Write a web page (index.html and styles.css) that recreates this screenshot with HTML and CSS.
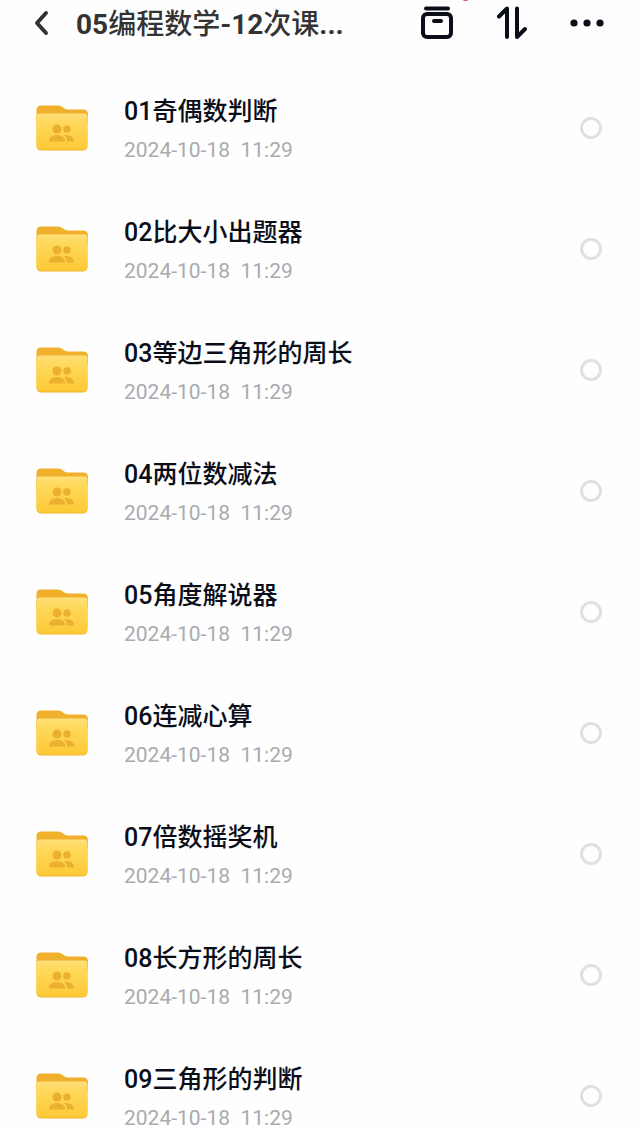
FILE: index.html
```html
<!DOCTYPE html>
<html lang="zh-CN">

<head>
    <meta charset="UTF-8">
    <meta name="viewport" content="width=device-width, initial-scale=1.0">
    <title>05编程数学-12次课</title>
    <link rel="stylesheet" href="styles.css">
</head>

<body>
    <svg class="symbols" aria-hidden="true">
        <defs>
            <linearGradient id="front" x1="0" y1="0" x2="0" y2="1">
                <stop offset="0" stop-color="#ffe07a" />
                <stop offset="0.25" stop-color="#ffd95c" />
                <stop offset="1" stop-color="#fdc936" />
            </linearGradient>
            <symbol id="folder" viewBox="0 0 52 46">
                <path fill="#f0b02c" d="M5 0.500h17q3 0 5 2t5 2h15q5 0 5 5v8H0.500V5q0-4.500 4.500-4.500z" />
                <path fill="#f3b52c" d="M0.500 13q0-3.500 3.500-3.500h44.500q3 0 3 3v28q0 5-5 5H5.500q-5 0-5-5z" />
                <path fill="url(#front)" d="M0.500 12q0-3.500 3.500-3.500h44.500q3 0 3 3v28q0 5-5 5H5.500q-5 0-5-5z" />
                <g fill="#eab02e">
                    <circle cx="21" cy="24" r="4.500" />
                    <circle cx="31" cy="24" r="3.800" />
                    <path d="M13 36.500q0-6.500 8-6.500t8 6.500z" />
                    <path d="M28 30q10-1 10 6.500h-7q0-4-3-6.500z" />
                </g>
            </symbol>
        </defs>
    </svg>

    <header class="topbar">
        <button class="icon-btn back" type="button" aria-label="返回">
            <svg width="16" height="26" viewBox="0 0 16 26">
                <path class="stroke" d="M12 3L3 13l9 10" />
            </svg>
        </button>
        <h1 class="page-title">05<span class="cjk">编程数学</span>-12<span class="cjk">次课</span>...</h1>
        <div class="actions">
            <button class="icon-btn" type="button" aria-label="收纳">
                <svg width="34" height="34" viewBox="0 0 34 34">
                    <path class="stroke" d="M6 2.500h22" />
                    <rect class="stroke" x="3" y="8" width="28" height="23" rx="4" />
                    <path class="stroke" d="M14 15h7" />
                </svg>
                <span class="badge"></span>
            </button>
            <button class="icon-btn" type="button" aria-label="排序">
                <svg width="32" height="34" viewBox="0 0 32 34">
                    <path class="stroke" d="M3 10.500l8-8v28.500M21 2.500v28.500l8-8" />
                </svg>
            </button>
            <button class="icon-btn" type="button" aria-label="更多">
                <svg width="34" height="34" viewBox="0 0 34 34">
                    <circle cx="4" cy="17" r="3.600" />
                    <circle cx="17" cy="17" r="3.600" />
                    <circle cx="30" cy="17" r="3.600" />
                </svg>
            </button>
        </div>
    </header>

    <ul class="files">
        <li class="file">
            <svg class="folder"><use href="#folder" /></svg>
            <label class="info" for="f1">
                <span class="name">01奇偶数判断</span>
                <time class="date">2024-10-18  11:29</time>
            </label>
            <input class="pick" type="checkbox" id="f1">
        </li>
        <li class="file">
            <svg class="folder"><use href="#folder" /></svg>
            <label class="info" for="f2">
                <span class="name">02比大小出题器</span>
                <time class="date">2024-10-18  11:29</time>
            </label>
            <input class="pick" type="checkbox" id="f2">
        </li>
        <li class="file">
            <svg class="folder"><use href="#folder" /></svg>
            <label class="info" for="f3">
                <span class="name">03等边三角形的周长</span>
                <time class="date">2024-10-18  11:29</time>
            </label>
            <input class="pick" type="checkbox" id="f3">
        </li>
        <li class="file">
            <svg class="folder"><use href="#folder" /></svg>
            <label class="info" for="f4">
                <span class="name">04两位数减法</span>
                <time class="date">2024-10-18  11:29</time>
            </label>
            <input class="pick" type="checkbox" id="f4">
        </li>
        <li class="file">
            <svg class="folder"><use href="#folder" /></svg>
            <label class="info" for="f5">
                <span class="name">05角度解说器</span>
                <time class="date">2024-10-18  11:29</time>
            </label>
            <input class="pick" type="checkbox" id="f5">
        </li>
        <li class="file">
            <svg class="folder"><use href="#folder" /></svg>
            <label class="info" for="f6">
                <span class="name">06连减心算</span>
                <time class="date">2024-10-18  11:29</time>
            </label>
            <input class="pick" type="checkbox" id="f6">
        </li>
        <li class="file">
            <svg class="folder"><use href="#folder" /></svg>
            <label class="info" for="f7">
                <span class="name">07倍数摇奖机</span>
                <time class="date">2024-10-18  11:29</time>
            </label>
            <input class="pick" type="checkbox" id="f7">
        </li>
        <li class="file">
            <svg class="folder"><use href="#folder" /></svg>
            <label class="info" for="f8">
                <span class="name">08长方形的周长</span>
                <time class="date">2024-10-18  11:29</time>
            </label>
            <input class="pick" type="checkbox" id="f8">
        </li>
        <li class="file">
            <svg class="folder"><use href="#folder" /></svg>
            <label class="info" for="f9">
                <span class="name">09三角形的判断</span>
                <time class="date">2024-10-18  11:29</time>
            </label>
            <input class="pick" type="checkbox" id="f9">
        </li>
    </ul>
</body>

</html>
```

FILE: styles.css
```css
* {
    box-sizing: border-box;
}

body {
    display: flex;
    flex-direction: column;
    height: 100vh;
    margin: 0;
    overflow: hidden;
    background: #fefefe;
    font-family: Roboto, "Noto Sans CJK SC", sans-serif;
}

.symbols {
    position: absolute;
    width: 0;
    height: 0;
}

.topbar {
    display: flex;
    flex-shrink: 0;
    align-items: flex-start;
    padding: 6px 36px 23px 34px;
}

.icon-btn {
    position: relative;
    display: flex;
    align-items: center;
    height: 34px;
    padding: 0;
    border: 0;
    background: none;
    color: #0b0e19;
}

.icon-btn svg {
    fill: currentColor;
}

.icon-btn .stroke {
    fill: none;
    stroke: currentColor;
    stroke-width: 4;
    stroke-linecap: round;
    stroke-linejoin: round;
}

.back {
    color: #333;
}

.page-title {
    flex: 1;
    margin: 0 0 0 26px;
    color: #333;
    font-size: 28px;
    font-weight: 700;
    line-height: 38px;
    white-space: nowrap;
}

.cjk {
    font-weight: 500;
}

.actions {
    display: flex;
    gap: 42px;
}

.badge {
    position: absolute;
    top: -14px;
    left: 41px;
    width: 9px;
    height: 9px;
    border-radius: 50%;
    background: #d9445c;
}

.files {
    flex: 1;
    min-height: 0;
    margin: 0;
    padding: 0;
    overflow: hidden;
    list-style: none;
}

.file {
    display: flex;
    align-items: center;
    height: 121px;
    padding: 0 38px 0 36px;
}

.folder {
    width: 52px;
    height: 46px;
}

.info {
    display: flex;
    flex: 1;
    flex-direction: column;
    gap: 6px;
    margin-left: 36px;
    padding-top: 6px;
}

.name {
    color: #0b0e19;
    font-size: 25px;
    font-weight: 500;
    line-height: 32px;
}

.date {
    color: #a9abb0;
    font-size: 21px;
    line-height: 32px;
    white-space: pre;
}

.pick {
    width: 22px;
    height: 22px;
    margin: 0;
    border: 3px solid #e0e0e0;
    border-radius: 50%;
    appearance: none;
}

.pick:checked {
    background: #fdc936;
}
```
